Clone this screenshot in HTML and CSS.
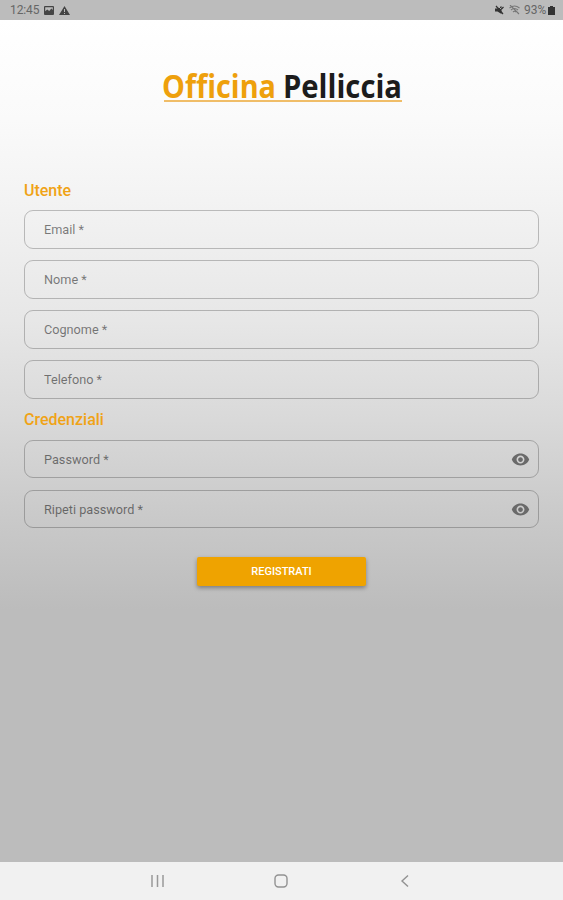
FILE: index.html
```html
<!DOCTYPE html>
<html lang="it">
<head>
    <meta charset="UTF-8">
    <meta name="viewport" content="width=device-width, initial-scale=1.0">
    <title>Officina Pelliccia</title>
    <link rel="stylesheet" href="styles.css">
</head>
<body>
    <div class="status-bar">
        <div class="status-left">
            <span class="clock">12:45</span>
            <svg class="icon-image" width="10" height="9" viewBox="0 0 10 9">
                <path fill="#444" fill-rule="evenodd" d="M1 0h8a1 1 0 0 1 1 1v7a1 1 0 0 1-1 1H1a1 1 0 0 1-1-1V1a1 1 0 0 1 1-1zM1.200 1.200v4l2-1.700 2 1.500 2.200-2.500 1.400 1.500V1.200z"/>
            </svg>
            <svg class="icon-warning" width="11" height="9" viewBox="0 0 11 9">
                <path fill="#444" fill-rule="evenodd" d="M5.500 0L11 9H0zM5 3v3h1V3zM5 7v1h1V7z"/>
            </svg>
        </div>
        <div class="status-right">
            <svg width="9" height="10" viewBox="0 0 9 10">
                <path fill="#333" d="M0 3.500h2.500L6.500 1v8L2.500 6.500H0z"/>
                <path stroke="#bcbcbc" stroke-width="1" d="M2 0l7 7"/>
                <path stroke="#333" stroke-width="1.200" d="M1 1l7 8M6 4.500L8.500 2"/>
            </svg>
            <svg class="icon-wifi" width="11" height="10" viewBox="0 0 11 10">
                <path fill="none" stroke="#777" stroke-width="1.100" d="M.5 3Q5.500-1 10.500 3M2 5Q5.500 2 9 5M4 7q1.500-1.500 3 0M1 0l9 9"/>
            </svg>
            <span class="battery">93%</span>
            <svg width="7" height="9" viewBox="0 0 7 9">
                <path fill="#333" d="M2 0h3v1h2v8H0V1h2z"/>
            </svg>
        </div>
    </div>

    <main class="content">
        <svg class="logo" width="260" height="48" viewBox="0 0 260 48">
            <text class="logo-text logo-orange" x="10" y="36" textLength="114" lengthAdjust="spacingAndGlyphs">Officina</text>
            <text class="logo-text" x="131" y="36" textLength="119" lengthAdjust="spacingAndGlyphs">Pelliccia</text>
            <rect x="12" y="38" width="238" height="2" fill="#f0bd68"/>
        </svg>

        <form class="register-form">
            <h2>Utente</h2>
            <div class="field"><input type="text" placeholder="Email *"></div>
            <div class="field"><input type="text" placeholder="Nome *"></div>
            <div class="field"><input type="text" placeholder="Cognome *"></div>
            <div class="field"><input type="text" placeholder="Telefono *"></div>

            <h2 class="second">Credenziali</h2>
            <div class="field field-password">
                <input type="password" placeholder="Password *">
                <svg class="eye" width="19" height="19" viewBox="0 0 24 24">
                    <path d="M12 4.500C7 4.500 2.730 7.610 1 12c1.730 4.390 6 7.500 11 7.500s9.270-3.110 11-7.500c-1.730-4.390-6-7.500-11-7.500zM12 17c-2.760 0-5-2.240-5-5s2.240-5 5-5 5 2.240 5 5-2.240 5-5 5zm0-8c-1.660 0-3 1.340-3 3s1.340 3 3 3 3-1.340 3-3-1.340-3-3-3z"/>
                </svg>
            </div>
            <div class="field field-password">
                <input type="password" placeholder="Ripeti password *">
                <svg class="eye" width="19" height="19" viewBox="0 0 24 24">
                    <path d="M12 4.500C7 4.500 2.730 7.610 1 12c1.730 4.390 6 7.500 11 7.500s9.270-3.110 11-7.500c-1.730-4.390-6-7.500-11-7.500zM12 17c-2.760 0-5-2.240-5-5s2.240-5 5-5 5 2.240 5 5-2.240 5-5 5zm0-8c-1.660 0-3 1.340-3 3s1.340 3 3 3 3-1.340 3-3-1.340-3-3-3z"/>
                </svg>
            </div>
            <button type="submit">REGISTRATI</button>
        </form>
    </main>

    <nav class="nav-bar">
        <svg width="14" height="14" viewBox="0 0 14 14">
            <path stroke="#999" stroke-width="1.500" d="M2 1v12M7.500 1v12M13 1v12"/>
        </svg>
        <svg width="14" height="14" viewBox="0 0 14 14">
            <rect x="1" y="1" width="12" height="12" rx="3.500" fill="none" stroke="#929292" stroke-width="1.400"/>
        </svg>
        <svg width="14" height="14" viewBox="0 0 14 14">
            <path fill="none" stroke="#929292" stroke-width="1.400" d="M10 1.500L4 7l6 5.500"/>
        </svg>
    </nav>
</body>
</html>
```

FILE: styles.css
```css
* {
    box-sizing: border-box;
}

body {
    margin: 0;
    height: 900px;
    display: flex;
    flex-direction: column;
    font-family: Roboto, sans-serif;
    overflow: hidden;
}

/* Barra di stato */
.status-bar {
    height: 20px;
    background-color: #bcbcbc;
    display: flex;
    justify-content: space-between;
    align-items: center;
    padding: 0 8px 0 10px;
    font-size: 12px;
    color: #666;
}

.status-left,
.status-right {
    display: flex;
    align-items: center;
}

.clock {
    width: 29px;
    letter-spacing: -0.1px;
}

.icon-image {
    margin-left: 5px;
}

.icon-warning {
    margin-left: 5px;
}

.icon-wifi {
    margin: 0 4px 0 5px;
}

.battery {
    width: 24px;
}

.content {
    flex: 1;
    padding: 42px 24px 0;
    background: linear-gradient(to bottom, #ffffff 0, #fafafa 100px, #f3f3f3 180px, #e7e7e7 300px, #d9d9d9 400px, #c9c9c9 500px, #bcbcbc 590px);
}

.logo {
    display: block;
    margin: 0 auto;
}

.logo-text {
    font-family: "Open Sans", "Noto Sans", sans-serif;
    font-size: 33px;
    font-weight: 700;
    fill: #1c1c1c;
}

.logo-text.logo-orange {
    fill: #eea00c;
}

/* Modulo di registrazione */
.register-form {
    padding-top: 71px;
    display: flex;
    flex-direction: column;
}

h2 {
    margin: 0 0 9px;
    font-size: 16px;
    line-height: 20px;
    font-weight: 500;
    color: #f0a316;
}

h2.second {
    margin-bottom: 10px;
}

.field {
    height: 39px;
    margin-bottom: 11px;
    display: flex;
    align-items: center;
    border: 1px solid rgba(0, 0, 0, 0.23);
    border-radius: 9px;
    padding: 0 9px 0 19px;
}

.field-password {
    height: 38px;
    padding-right: 8px;
}

.field-password + .field-password {
    margin-top: 1px;
}

input {
    flex: 1;
    border: none;
    outline: none;
    padding: 0;
    background: transparent;
    font-family: inherit;
    font-size: 12.7px;
}

input::placeholder {
    color: rgba(0, 0, 0, 0.5);
}

.eye {
    fill: #6a6a6a;
}

button {
    align-self: center;
    width: 169px;
    height: 29px;
    margin-top: 18px;
    padding: 0;
    border: none;
    border-radius: 2px;
    background-color: #efa300;
    color: #fff;
    font-family: inherit;
    font-size: 11px;
    font-weight: 500;
    box-shadow: 0 2px 4px rgba(0, 0, 0, 0.35);
}

/* Barra di navigazione */
.nav-bar {
    height: 38px;
    padding-right: 1px;
    background-color: #f1f1f1;
    display: flex;
    justify-content: center;
    align-items: center;
    gap: 110px;
}
```
